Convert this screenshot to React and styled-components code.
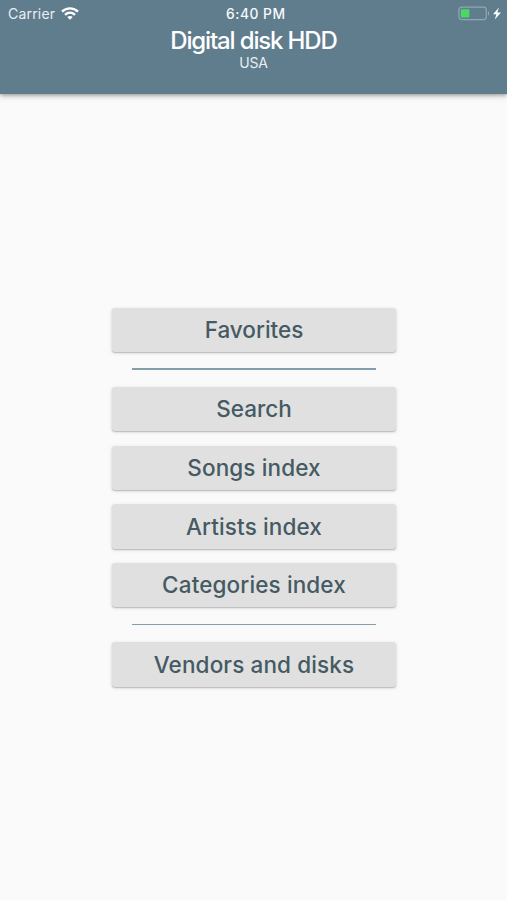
import React from 'react';
import styled, { createGlobalStyle } from 'styled-components';

const GlobalStyle = createGlobalStyle`
  * { box-sizing: border-box; }
  body {
    margin: 0;
    background: #fafafa;
    font-family: Inter, Roboto, sans-serif;
  }
`;

const Screen = styled.div`
  display: flex;
  flex-direction: column;
  width: 100%;
  height: 900px;
  overflow: hidden;
`;

const Header = styled.header`
  flex: none;
  height: 94px;
  background: #607d8d;
  color: #fff;
  box-shadow: 0 1px 4px rgba(0, 0, 0, 0.36), 0 3px 7px rgba(0, 0, 0, 0.1);
`;

const StatusBar = styled.div`
  display: grid;
  grid-template-columns: 1fr auto 1fr;
  align-items: center;
  height: 27px;
  padding: 0 5px 0 8px;
`;

const Carrier = styled.div`
  display: flex;
  align-items: center;
  gap: 6px;
  font-size: 14px;
  letter-spacing: 0.2px;
  color: #e9eff2;
`;

const Clock = styled.div`
  padding-left: 1.5px;
  font-size: 13.8px;
  font-weight: 500;
  letter-spacing: 0.5px;
  color: #f6f9fa;
`;

const Power = styled.div`
  display: flex;
  justify-content: flex-end;
  align-items: center;
`;

const Title = styled.h1`
  margin: 0;
  font-size: 24px;
  line-height: 28px;
  font-weight: 500;
  letter-spacing: -1.15px;
  text-align: center;
`;

const Subtitle = styled.div`
  margin-top: -1px;
  font-size: 14px;
  line-height: 17px;
  letter-spacing: -0.15px;
  text-align: center;
  color: #e9eff2;
`;

const Menu = styled.nav`
  display: flex;
  flex-direction: column;
  align-items: center;
  gap: 14.2px;
  padding: 213.5px 0 0 1px;
`;

const MenuButton = styled.button`
  width: 284.5px;
  height: 44.5px;
  padding: 0;
  border: 0;
  border-radius: 3px;
  background: #e0e0e0;
  box-shadow: 0 1px 1.5px rgba(0, 0, 0, 0.22), 0 1px 4px rgba(0, 0, 0, 0.1);
  color: #455a62;
  font: 450 22.5px/44px Inter, Roboto, sans-serif;
  letter-spacing: ${({ $tracking = 0.12 }) => $tracking}px;
`;

const Divider = styled.hr`
  width: 244.5px;
  height: 1.5px;
  margin: 2px 0 3px;
  border: 0;
  background: #859eac;
`;

const WifiIcon = () => (
  <svg width="18" height="13" viewBox="0 0 18 13" fill="none" stroke="#fff" strokeWidth="2.4">
    <path d="M1 4.7C5.6.2 12.4.2 17 4.7" />
    <path d="M4 7.9c2.9-2.8 7.1-2.8 10 0" />
    <path d="M6.3 10.1c1.6-1.5 3.8-1.5 5.4 0L9 12.8z" fill="#fff" stroke="none" />
  </svg>
);

const BatteryIcon = () => (
  <svg width="44" height="16" viewBox="0 0 44 16">
    <rect x=".9" y="1.2" width="27.4" height="12.4" rx="2.8" fill="none" stroke="#91a7b2" strokeWidth="1.2" />
    <rect x="2.8" y="3.2" width="8.6" height="8.4" rx="1" fill="#4bd964" />
    <path d="M30 5.2c1.6.5 1.6 3.9 0 4.4z" fill="#91a7b2" />
    <path d="M41 1.6 35 8.3h3.4L36.8 13.6l6.2-7h-3.7z" fill="#fff" />
  </svg>
);

export default function App() {
  return (
    <>
      <GlobalStyle />
      <Screen>
        <Header>
          <StatusBar>
            <Carrier>Carrier<WifiIcon /></Carrier>
            <Clock>6:40 PM</Clock>
            <Power><BatteryIcon /></Power>
          </StatusBar>
          <Title>Digital disk HDD</Title>
          <Subtitle>USA</Subtitle>
        </Header>
        <Menu>
          <MenuButton $tracking={0}>Favorites</MenuButton>
          <Divider />
          <MenuButton $tracking={0}>Search</MenuButton>
          <MenuButton>Songs index</MenuButton>
          <MenuButton>Artists index</MenuButton>
          <MenuButton>Categories index</MenuButton>
          <Divider />
          <MenuButton>Vendors and disks</MenuButton>
        </Menu>
      </Screen>
    </>
  );
}
